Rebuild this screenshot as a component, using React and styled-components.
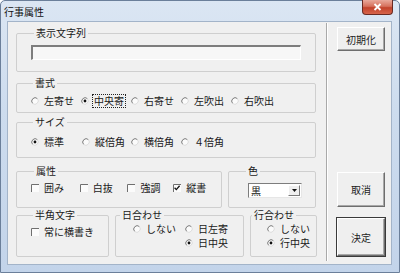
import styled, { createGlobalStyle } from "styled-components";

const Global = createGlobalStyle`
  html, body { margin: 0; padding: 0; background: #fff; }
  body {
    font-family: "Noto Sans CJK JP", "Noto Sans", sans-serif;
    font-size: 10px;
    color: #1a1a1a;
  }
`;

const Window = styled.div`
  width: 400px;
  height: 273px;
  box-sizing: border-box;
  display: flex;
  flex-direction: column;
  border: 1px solid #6b7f9a;
  border-radius: 5px 5px 0 0;
  background: linear-gradient(to bottom, #dbe6f3 0%, #cddcee 40%, #c3d4ea 100%);
  padding: 0 7px 7px 6px;
`;

const TitleBar = styled.div`
  height: 20px;
  display: flex;
  align-items: flex-start;
`;

const Title = styled.span`
  margin: 5px 0 0 -3px;
  font-size: 10px;
  line-height: 12px;
  color: #111;
`;

const CloseButton = styled.div`
  margin: -1px -1px 0 auto;
  width: 31px;
  height: 15px;
  box-sizing: border-box;
  border: 1px solid #6a2a22;
  border-top: none;
  border-radius: 0 0 4px 4px;
  background: linear-gradient(to bottom, #e9a99b 0%, #d6715d 45%, #c2422b 55%, #d7654b 100%);
  display: flex;
  align-items: center;
  justify-content: center;
`;

const Client = styled.div`
  flex: 1;
  display: flex;
  background: #f0f0f0;
  border: 1px solid #a3b4c9;
`;

const LeftColumn = styled.div`
  width: 318px;
  box-sizing: border-box;
  padding: 5px 0 0 8px;
  display: flex;
  flex-direction: column;
`;

const Separator = styled.div`
  width: 1px;
  margin: 1px 0 3px;
  background: #a9a9a9;
  border-right: 1px solid #fff;
`;

const RightColumn = styled.div`
  flex: 1;
  padding: 5px 0 8px 9px;
  display: flex;
  flex-direction: column;
`;

const Spacer = styled.div`
  flex: 1;
`;

const Button = styled.div`
  width: 48px;
  height: ${(p) => p.$h}px;
  margin-top: ${(p) => p.$mt || 0}px;
  box-sizing: border-box;
  display: flex;
  align-items: center;
  justify-content: center;
  background: #efefef;
  border: 1px solid;
  border-color: #fff #6e6e6e #6e6e6e #fff;
  box-shadow: inset -1px -1px #a8a8a8;
  outline: ${(p) => (p.$default ? "1px solid #3a3a3a" : "none")};
  font-size: 10px;
  color: #222;
`;

const Row = styled.div`
  display: flex;
  gap: 6px;
  margin-top: ${(p) => p.$mt || 0}px;
`;

const Group = styled.fieldset`
  margin: ${(p) => p.$mt || 0}px 0 0;
  padding: 0;
  width: ${(p) => p.$w}px;
  box-sizing: border-box;
  min-width: 0;
  border: 1px solid #cfcfcf;
  border-radius: 2px;
`;

const Legend = styled.legend`
  margin-left: ${(p) => p.$ml}px;
  padding: 0 2px;
  font-size: 10px;
  line-height: 12px;
  height: 12px;
  color: #1a1a1a;
`;

const Body = styled.div`
  padding: ${(p) => p.$mt || 0}px 0 ${(p) => p.$pb || 0}px ${(p) => p.$pl || 0}px;
`;

const TextBox = styled.div`
  width: 270px;
  height: 15px;
  box-sizing: border-box;
  background: #f7f7f7;
  border-top: 2px solid #7d7d7d;
  border-left: 2px solid #7d7d7d;
  border-right: 1px solid #fff;
  border-bottom: 1px solid #fff;
`;

const Options = styled.div`
  display: flex;
  height: 12px;
  align-items: center;
`;

const OptionGrid = styled.div`
  display: grid;
  grid-template-columns: ${(p) => p.$cols};
  grid-auto-rows: 14px;
  align-items: center;
`;

const Option = styled.div`
  width: ${(p) => (p.$w ? `${p.$w}px` : "auto")};
  display: flex;
  align-items: center;
  gap: 5px;
  grid-column: ${(p) => p.$col || "auto"};
  grid-row: ${(p) => p.$row || "auto"};
  white-space: nowrap;
  svg { flex: none; }
`;

const OptionText = styled.span`
  line-height: 12px;
  padding: 0 1px;
  margin-left: -1px;
  outline: ${(p) => (p.$focus ? "1px dotted #222" : "none")};
  outline-offset: 0;
`;

const Select = styled.div`
  width: 54px;
  height: 15px;
  box-sizing: border-box;
  display: flex;
  align-items: center;
  background: #fff;
  border-top: 1px solid #7d7d7d;
  border-left: 1px solid #7d7d7d;
  border-right: 1px solid #e6e6e6;
  border-bottom: 1px solid #e6e6e6;
  padding: 0 1px 0 2px;
`;

const SelectValue = styled.span`
  flex: 1;
  font-size: 10px;
  line-height: 12px;
  color: #111;
`;

const SelectArrow = styled.div`
  width: 12px;
  height: 11px;
  box-sizing: border-box;
  display: flex;
  align-items: center;
  justify-content: center;
  background: #efefef;
  border: 1px solid;
  border-color: #fff #7a7a7a #7a7a7a #fff;
`;

const Radio = ({ checked }) => (
  <svg width="8" height="8" viewBox="0 0 8 8">
    <circle cx="4" cy="4" r="3.3" fill="#fbfbfb" />
    <path d="M6.4 1.6 A3.4 3.4 0 0 0 1.6 6.4" stroke="#7a7a7a" strokeWidth="1" fill="none" />
    <path d="M1.6 6.4 A3.4 3.4 0 0 0 6.4 1.6" stroke="#dcdcdc" strokeWidth="1" fill="none" />
    {checked && <circle cx="4" cy="4" r="1.4" fill="#111" />}
  </svg>
);

const Check = ({ checked }) => (
  <svg width="8" height="8" viewBox="0 0 8 8">
    <rect x="0" y="0" width="8" height="8" fill="#fbfbfb" />
    <path d="M0.5 8 V0.5 H8" stroke="#6f6f6f" strokeWidth="1" fill="none" />
    {checked && (
      <path d="M1.6 3.8 L3.3 5.6 L6.6 1.8" stroke="#111" strokeWidth="1.3" fill="none" />
    )}
  </svg>
);

const RadioOption = ({ label, checked, focus, w, col, row }) => (
  <Option $w={w} $col={col} $row={row}>
    <Radio checked={checked} />
    <OptionText $focus={focus}>{label}</OptionText>
  </Option>
);

const CheckOption = ({ label, checked, w }) => (
  <Option $w={w}>
    <Check checked={checked} />
    <OptionText>{label}</OptionText>
  </Option>
);

export default function App() {
  return (
    <>
      <Global />
      <Window>
        <TitleBar>
          <Title>行事属性</Title>
          <CloseButton>
            <svg width="9" height="8" viewBox="0 0 9 8">
              <path d="M1.5 1 L7.5 7 M7.5 1 L1.5 7" stroke="#fff" strokeWidth="1.8" />
            </svg>
          </CloseButton>
        </TitleBar>
        <Client>
          <LeftColumn>
            <Group $w={300}>
              <Legend $ml={17}>表示文字列</Legend>
              <Body $mt={6} $pb={11} $pl={14}>
                <TextBox />
              </Body>
            </Group>

            <Group $w={300} $mt={5}>
              <Legend $ml={16}>書式</Legend>
              <Body $mt={6} $pb={5} $pl={14}>
                <Options>
                  <RadioOption w={50} label="左寄せ" />
                  <RadioOption w={50} label="中央寄" checked focus />
                  <RadioOption w={50} label="右寄せ" />
                  <RadioOption w={50} label="左吹出" />
                  <RadioOption w={50} label="右吹出" />
                </Options>
              </Body>
            </Group>

            <Group $w={300} $mt={3}>
              <Legend $ml={16}>サイズ</Legend>
              <Body $mt={8} $pb={9} $pl={14}>
                <Options>
                  <RadioOption w={51} label="標準" checked />
                  <RadioOption w={49} label="縦倍角" />
                  <RadioOption w={50} label="横倍角" />
                  <RadioOption w={50} label="４倍角" />
                </Options>
              </Body>
            </Group>

            <Row $mt={7}>
              <Group $w={206}>
                <Legend $ml={17}>属性</Legend>
                <Body $mt={5} $pb={13} $pl={14}>
                  <Options>
                    <CheckOption w={51} label="囲み" />
                    <CheckOption w={50} label="白抜" />
                    <CheckOption w={48} label="強調" />
                    <CheckOption w={50} label="縦書" checked />
                  </Options>
                </Body>
              </Group>
              <Group $w={88}>
                <Legend $ml={17}>色</Legend>
                <Body $mt={6} $pl={19}>
                  <Select>
                    <SelectValue>黒</SelectValue>
                    <SelectArrow>
                      <svg width="5" height="3" viewBox="0 0 5 3">
                        <path d="M0 0 H5 L2.5 3 Z" fill="#111" />
                      </svg>
                    </SelectArrow>
                  </Select>
                </Body>
              </Group>
            </Row>

            <Row $mt={1}>
              <Group $w={93}>
                <Legend $ml={16}>半角文字</Legend>
                <Body $mt={5} $pl={14}>
                  <Options>
                    <CheckOption label="常に横書き" />
                  </Options>
                </Body>
              </Group>
              <Group $w={129}>
                <Legend $ml={4}>日合わせ</Legend>
                <Body $mt={1} $pb={6} $pl={17}>
                  <OptionGrid $cols="52px auto">
                    <RadioOption label="しない" col={1} row={1} />
                    <RadioOption label="日左寄" col={2} row={1} />
                    <RadioOption label="日中央" checked col={2} row={2} />
                  </OptionGrid>
                </Body>
              </Group>
              <Group $w={67}>
                <Legend $ml={1}>行合わせ</Legend>
                <Body $mt={1} $pb={6} $pl={16}>
                  <OptionGrid $cols="auto">
                    <RadioOption label="しない" />
                    <RadioOption label="行中央" checked />
                  </OptionGrid>
                </Body>
              </Group>
            </Row>
          </LeftColumn>
          <Separator />
          <RightColumn>
            <Button $h={24}>初期化</Button>
            <Spacer />
            <Button $h={35}>取消</Button>
            <Button $h={38} $mt={11} $default>
              決定
            </Button>
          </RightColumn>
        </Client>
      </Window>
    </>
  );
}
